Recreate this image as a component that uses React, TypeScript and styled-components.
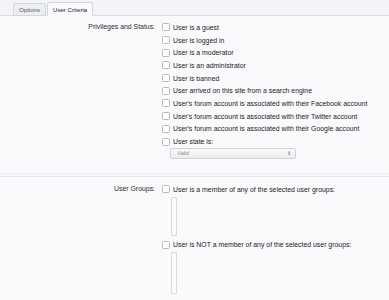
import React from "react";
import styled, { createGlobalStyle } from "styled-components";

const GlobalStyle = createGlobalStyle`
    html, body {
        margin: 0;
        padding: 0;
        background: #fafafc;
    }
    body {
        font-family: "Liberation Sans", Arial, sans-serif;
        color: #222;
    }
`;

const Page = styled.div`
    width: 389px;
    height: 300px;
    overflow: hidden;
    background: #fafafc;
`;

const TabBar = styled.div`
    display: flex;
    align-items: flex-end;
    height: 16px;
    padding-left: 13px;
    background: #f4f4f8;
    border-bottom: 1px solid #dcdce4;
    box-sizing: border-box;
`;

const Tab = styled.div<{ active?: boolean }>`
    height: ${({ active }) => (active ? "14px" : "13px")};
    margin-bottom: -1px;
    margin-right: 1px;
    padding: 0 5px;
    display: flex;
    align-items: center;
    font-size: 6.1px;
    color: ${({ active }) => (active ? "#222" : "#555a66")};
    background: ${({ active }) => (active ? "#fafafc" : "#eceef3")};
    border: 1px solid #d4d6de;
    border-bottom-color: ${({ active }) => (active ? "#fafafc" : "#d4d6de")};
    border-radius: 3px 3px 0 0;
    box-sizing: border-box;
`;

const Section = styled.div<{ top: number; bottom: number }>`
    padding: ${({ top }) => top}px 0 ${({ bottom }) => bottom}px;
`;

const FormRow = styled.div`
    display: grid;
    grid-template-columns: 155px 1fr;
    column-gap: 7px;
    font-size: 6.9px;
`;

const Label = styled.div`
    text-align: right;
    line-height: 12.7px;
    color: #2a2a2a;
`;

const ChoiceList = styled.div`
    display: flex;
    flex-direction: column;
`;

const Choice = styled.label`
    display: flex;
    align-items: center;
    gap: 3px;
    height: 12.7px;
    white-space: nowrap;
`;

const Box = styled.span`
    width: 6px;
    height: 6px;
    border: 1px solid #b8b8c0;
    border-radius: 1.5px;
    background: #fff;
    flex-shrink: 0;
`;

const Select = styled.div`
    margin: 0 0 0 8px;
    width: 126px;
    height: 11px;
    box-sizing: border-box;
    border: 1px solid #d0d0d6;
    border-radius: 2px;
    background: linear-gradient(#fbfbfb, #ececef);
    display: flex;
    align-items: center;
    justify-content: space-between;
    padding: 0 4px 0 6px;
    font-size: 5.4px;
    font-style: italic;
    color: #8a8a8a;
`;

const Arrows = styled.span`
    font-style: normal;
    font-size: 5px;
    color: #666;
    line-height: 1;
`;

const Divider = styled.div`
    height: 2px;
    border-top: 1px solid #f0f0f4;
    border-bottom: 1px solid #e6e6ec;
`;

const ListBox = styled.div<{ h: number }>`
    margin: 1px 0 3px 9px;
    width: 4px;
    height: ${({ h }) => h}px;
    border: 1px solid #dadade;
    border-radius: 1px;
    background: #fcfcfd;
`;

const privileges = [
    "User is a guest",
    "User is logged in",
    "User is a moderator",
    "User is an administrator",
    "User is banned",
    "User arrived on this site from a search engine",
    "User's forum account is associated with their Facebook account",
    "User's forum account is associated with their Twitter account",
    "User's forum account is associated with their Google account",
    "User state is:",
];

export default function App() {
    return (
        <Page>
            <GlobalStyle />
            <TabBar>
                <Tab>Options</Tab>
                <Tab active>User Criteria</Tab>
            </TabBar>
            <Section top={5} bottom={14}>
                <FormRow>
                    <Label>Privileges and Status:</Label>
                    <ChoiceList>
                        {privileges.map((p) => (
                            <Choice key={p}>
                                <Box />
                                {p}
                            </Choice>
                        ))}
                        <Select>
                            Valid
                            <Arrows>⇕</Arrows>
                        </Select>
                    </ChoiceList>
                </FormRow>
            </Section>
            <Divider />
            <Section top={6} bottom={0}>
                <FormRow>
                    <Label>User Groups:</Label>
                    <ChoiceList>
                        <Choice>
                            <Box />
                            User is a member of any of the selected user groups:
                        </Choice>
                        <ListBox h={37} />
                        <Choice>
                            <Box />
                            User is NOT a member of any of the selected user groups:
                        </Choice>
                        <ListBox h={40} />
                    </ChoiceList>
                </FormRow>
            </Section>
        </Page>
    );
}
